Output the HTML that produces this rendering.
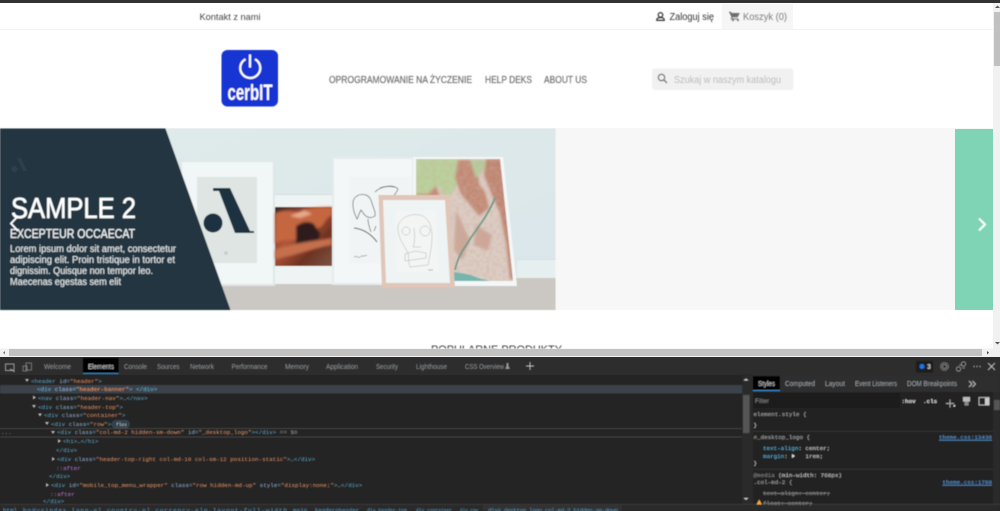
<!DOCTYPE html>
<html lang="pl"><head><meta charset="utf-8"><title>cerbIT</title>
<style>
html,body{margin:0;padding:0;width:1000px;height:511px;overflow:hidden;background:#fff}
svg{display:block}
text{font-family:"Liberation Sans",sans-serif;white-space:pre}
.m text,text.m{font-family:"Liberation Mono",monospace;font-size:5.9px}
.t{fill:#5db0d7}.a{fill:#9bbbdc}.v{fill:#f29766}.g{fill:#9a9a9a}.p{fill:#c678dd}
.tab text,.tab{font-size:7px;fill:#9aa0a6}
.n{fill:#777;font-size:10px;stroke:#777;stroke-width:.25}
.h{fill:#e4e8ea;font-size:10px;stroke:#e4e8ea;stroke-width:.12}
.l{fill:#5b9bd5;text-decoration:underline}
.st{fill:#8a8a8a;text-decoration:line-through}
.s{fill:#c8c8c8}
.bc{fill:#4f8fb0}
</style></head><body>
<svg width="1000" height="511" viewBox="0 0 1000 511" xmlns="http://www.w3.org/2000/svg">
<defs>
<linearGradient id="w" x1="0" y1="0" x2="1" y2="1"><stop offset="0" stop-color="#e0eaea"/><stop offset="1" stop-color="#dae6ea"/></linearGradient>
<linearGradient id="can" x1="0" y1="0" x2="1" y2="1"><stop offset="0" stop-color="#3a2826"/><stop offset=".4" stop-color="#b5563a"/><stop offset=".7" stop-color="#6e3222"/><stop offset="1" stop-color="#7a5444"/></linearGradient>
<filter id="b2" x="-5%" y="-5%" width="110%" height="110%"><feGaussianBlur stdDeviation="0.4"/></filter>
<filter id="b1" x="-10%" y="-10%" width="120%" height="120%"><feGaussianBlur stdDeviation="1.2"/></filter>
<filter id="noise" x="0" y="0" width="100%" height="100%"><feTurbulence type="fractalNoise" baseFrequency=".3" numOctaves="2" seed="4"/><feGaussianBlur stdDeviation=".5"/><feColorMatrix values="0 0 0 0 .6  0 0 0 0 .42  0 0 0 0 .36  0 0 0 1.1 -.42"/></filter>
<clipPath id="mc"><path d="M416 159H500L513 281H416z"/></clipPath>
</defs>

<rect width="1000" height="511" fill="#fff"/>
<rect width="1000" height="3" fill="#333"/>
<rect y="29" width="993" height="1" fill="#f3f3f3"/>
<rect x="722" y="4" width="71" height="25" fill="#f6f6f6"/>
<g filter="url(#b2)">
<text x="199.5" y="20" font-size="9.5" fill="#444" textLength="61" lengthAdjust="spacingAndGlyphs">Kontakt z nami</text>
<path d="M660.5 12.6a2.3 2.3 0 1 1 0 4.6a2.3 2.3 0 1 1 0-4.6M656.8 20.4v-.9c0-1.3 2.4-2 3.7-2s3.7.7 3.7 2v.9z" fill="none" stroke="#333" stroke-width="1.2"/>
<text x="669.5" y="20" font-size="10" fill="#333" textLength="44.5" lengthAdjust="spacingAndGlyphs">Zaloguj się</text>
<path d="M729 11.8h2l.6 1.2h8.2l-2.2 4.3h-5l-.6 1.1h6.2v1h-7.7l1-2.1-2-4.5h-.5z" fill="#6e6e6e"/>
<circle cx="733" cy="20.3" r="1" fill="#6e6e6e"/><circle cx="738" cy="20.3" r="1" fill="#6e6e6e"/>
<text x="743" y="20" font-size="10" fill="#7d7d7d" textLength="44" lengthAdjust="spacingAndGlyphs">Koszyk (0)</text>

<rect x="221.5" y="50" width="56.5" height="56.5" rx="6" fill="#1235d3"/>
<path d="M245.5 59.2a10 10 0 1 0 9.5 0" fill="none" stroke="#fff" stroke-width="2.2"/>
<path d="M250 54.5v13" stroke="#fff" stroke-width="2.2"/>
<text x="227.5" y="100" font-size="22" font-weight="bold" fill="#fff" textLength="45" lengthAdjust="spacingAndGlyphs">cerbIT</text>

<text x="329" y="83" class="n" textLength="143" lengthAdjust="spacingAndGlyphs">OPROGRAMOWANIE NA ŻYCZENIE</text>
<text x="485" y="83" class="n" textLength="47" lengthAdjust="spacingAndGlyphs">HELP DEKS</text>
<text x="544" y="83" class="n" textLength="43" lengthAdjust="spacingAndGlyphs">ABOUT US</text>
<rect x="652" y="68.5" width="141.5" height="21.5" rx="3" fill="#f1f1f1"/>
<circle cx="661.5" cy="77.5" r="3.2" fill="none" stroke="#777" stroke-width="1.3"/>
<path d="M664 80l3 3" stroke="#777" stroke-width="1.5"/>
<text x="674" y="83" font-size="10" fill="#b9b9b9" textLength="107" lengthAdjust="spacingAndGlyphs">Szukaj w naszym katalogu</text>
</g>

<rect y="128" width="993" height="182" fill="#f7f7f7"/>
<rect x="955" y="129" width="38" height="181" fill="#7fd4b6"/>
<g filter="url(#b2)">
<rect x="100" y="128.500" width="455.500" height="181.500" fill="url(#w)"/>
<rect x="517" y="259" width="38.500" height="19" fill="#e6efef"/>
<rect x="517" y="259" width="38.500" height=".8" fill="#cfdada"/>
<rect x="100" y="278" width="455.500" height="32" fill="#cbc7c2"/>
<!-- frame 1 -->
<rect x="180" y="160" width="95" height="126" fill="#dfe8e8"/>
<rect x="182" y="162" width="91" height="122" fill="#f1f6f6"/>
<rect x="197" y="177" width="60" height="86" fill="#dfe5e3"/>
<circle cx="213" cy="223" r="9.500" fill="#1f3141"/>
<path d="M213 188H230L250 231H254V233H235L219 191H213z" fill="#1f3141"/>
<circle cx="226" cy="253" r="2" fill="#c9cfcd"/>
<!-- frame 2 -->
<rect x="275" y="194" width="58" height="90" fill="#eef3f3"/>
<rect x="275" y="194" width="58" height="1" fill="#d5dddd"/>
<rect x="275" y="207" width="57" height="59" fill="url(#can)"/>
<g filter="url(#b1)">
<path d="M275 213c10-4 18-2 24-1 8-4 22-5 33-5v9c-8 1-6 10-14 12-12-2-16 4-20 12-6 0-14-1-23 4z" fill="#c4663f"/>
<path d="M296 226c6-4 12-6 18-2l6 10-2 9c-8 2-16 3-22 1z" fill="#2f1c1a"/>
<path d="M275 250c14-6 32-8 57-12v7c-14 2-34 10-57 14z" fill="#c4704e"/>
<path d="M290 216l14-6 8 4-12 4z" fill="#e8a98a"/>
</g>
<!-- frame 3 -->
<rect x="332" y="157" width="82" height="128" fill="#e4ecec"/>
<rect x="334" y="159" width="78" height="124" fill="#f4f7f7"/>
<rect x="349" y="177" width="62" height="86" fill="#f1f4f4"/>
<g fill="none" stroke="#555" stroke-width=".7">
<path d="M353 205c-1-8 6-12 13-10 5 2 5 6 7 11 1 4 3 7 2 10-3 2-7 2-9 0-3-2-4-5-5-6-2 3-3 8-4 9-2-4-4-9-4-14z"/>
<path d="M375 192c6-6 18-8 23-3-3 8-12 13-19 16"/>
<path d="M380 188c6-2 10-2 14-1"/>
<path d="M368 219c0 5 2 10 3 13M376 226l-2 5"/>
<path d="M354 228c10 1 18 7 23 14" stroke="#444" stroke-width="1"/>
<path d="M354 257c4-2 4 2 6 0s3 0 7-2" stroke-width=".5"/>
</g>
<!-- map -->
<path d="M413 157H503L517 286H413z" fill="#f4f7f7"/>
<path d="M416 159H500L513 281H416z" fill="#dccdc3"/>
<g clip-path="url(#mc)">
<g filter="url(#b1)">
<path d="M416 159H458L460 172 456 186 450 195 443 196 440 186 432 194 416 195z" fill="#b9d29b"/>
<path d="M416 194l12 0 8-8 4 10-24 2z" fill="#c78a74"/>
<path d="M458 160l-3 18 6 16 10 12 8 10 10-8-4-16-6-8-2-24z" fill="#c28a74"/>
<path d="M486 159l-2 16 8 20 8 18 6 30 4 36h6l-12-120z" fill="#bf8672"/>
<path d="M470 160h16l-2 10-8 8z" fill="#b5cc9e"/>
<path d="M456 210l14 30-8 20-8-10z" fill="#cba898"/>
<path d="M476 225l16 10-4 16-14-6z" fill="#cda698"/>
</g>
<rect x="416" y="159" width="100" height="122" filter="url(#noise)"/>
<path d="M495 198c-8 20-20 32-28 46-6 8-10 16-12 26" fill="none" stroke="#71998a" stroke-width="1.800"/>
<path d="M452 272c12 1 20 3 26 6l12 3h-38z" fill="#74b5ad"/>
</g>
<!-- pink frame -->
<path d="M378.500 195H449L455 288H382z" fill="#e0c6b9"/>
<path d="M383 200H445L450 283H386z" fill="#eef3f3"/>
<path d="M395 210H436L439 273H397z" fill="#f2f5f4"/>
<g fill="none" stroke="#b0b0b0" stroke-width=".5">
<path d="M398 226c2-8 12-13 22-11 8 2 12 10 12 22 0 8-2 18-4 28l-18 2c-2-6-1-10-2-14-4-8-11-16-10-27z"/>
<circle cx="406" cy="231" r="4"/><ellipse cx="425" cy="231" rx="5" ry="5"/>
<path d="M414 228c1 8 1 14-1 19h8M405 254l10-3 11 2v5l-21 3z"/>
</g>
<path d="M428 270h5" stroke="#888" stroke-width=".6"/>
<!-- dark panel -->
<path d="M0 128.500H165.500L230.500 310H0z" fill="#233441"/>
<circle cx="14.500" cy="169" r="3.200" fill="#2f3f4b"/>
<path d="M17 158h4l6 13h-4z" fill="#2f3f4b"/>
<text x="11" y="218" font-size="28.500" fill="#fff" stroke="#fff" stroke-width=".55" textLength="125" lengthAdjust="spacingAndGlyphs">SAMPLE 2</text>
<text x="10" y="238" font-size="12.500" fill="#eef1f2" stroke="#eef1f2" stroke-width=".3" textLength="125" lengthAdjust="spacingAndGlyphs">EXCEPTEUR OCCAECAT</text>
<text x="10" y="252" class="h" textLength="166" lengthAdjust="spacingAndGlyphs">Lorem ipsum dolor sit amet, consectetur</text>
<text x="10" y="263" class="h" textLength="165" lengthAdjust="spacingAndGlyphs">adipiscing elit. Proin tristique in tortor et</text>
<text x="10" y="274" class="h" textLength="143" lengthAdjust="spacingAndGlyphs">dignissim. Quisque non tempor leo.</text>
<text x="10" y="285" class="h" textLength="111" lengthAdjust="spacingAndGlyphs">Maecenas egestas sem elit</text>
<path d="M18 216l-7 7.500 7 7.500" fill="none" stroke="#fff" stroke-width="1.800"/>
<path d="M979 218.500l6 6-6 6" fill="none" stroke="#fff" stroke-width="2.200"/>
<text x="431" y="353" font-size="11" fill="#3d3d3d" textLength="131" lengthAdjust="spacingAndGlyphs">POPULARNE PRODUKTY</text>
</g>

<rect x="993" y="3" width="7" height="346" fill="#f1f1f1"/>
<rect x="994" y="12" width="6" height="54" fill="#c1c1c1"/>
<path d="M995 8l2.500-2.500L1000 8z" fill="#555"/>
<path d="M995 342l2.500 2.500L1000 342z" fill="#555"/>
<rect y="348.500" width="1000" height="8.500" fill="#f1f1f1"/>
<rect x="9" y="349" width="973" height="7" fill="#c1c1c1"/>
<path d="M5 351l-2 1.700 2 1.700z" fill="#777"/>
<path d="M987 351l2 1.700-2 1.700z" fill="#444"/>

<rect y="357" width="1000" height="154" fill="#242424"/>
<rect y="357" width="1000" height="18" fill="#2d2d2d"/>
<g filter="url(#b2)">
<rect x="5.500" y="364" width="8.500" height="6.500" fill="none" stroke="#bbb" stroke-width=".8"/>
<path d="M10 369l3 1.500 1.500 1.500" stroke="#bbb" stroke-width=".8" fill="none"/>
<rect x="26" y="363" width="5.500" height="7" fill="none" stroke="#888" stroke-width=".8"/>
<rect x="23" y="366" width="4" height="5" fill="none" stroke="#888" stroke-width=".8"/>
<g class="tab">
<text x="44" y="369" textLength="27" lengthAdjust="spacingAndGlyphs">Welcome</text>
<rect x="83" y="358" width="35.500" height="15.500" style="fill:#000"/>
<rect x="83" y="373" width="35.500" height="1" style="fill:#2d8fd8"/>
<text x="88" y="369" style="fill:#d0d0d0" textLength="26" lengthAdjust="spacingAndGlyphs">Elements</text>
<text x="124" y="369" textLength="23" lengthAdjust="spacingAndGlyphs">Console</text>
<text x="157" y="369" textLength="22.500" lengthAdjust="spacingAndGlyphs">Sources</text>
<text x="190" y="369" textLength="24" lengthAdjust="spacingAndGlyphs">Network</text>
<text x="231.500" y="369" textLength="36" lengthAdjust="spacingAndGlyphs">Performance</text>
<text x="285" y="369" textLength="24" lengthAdjust="spacingAndGlyphs">Memory</text>
<text x="326" y="369" textLength="32" lengthAdjust="spacingAndGlyphs">Application</text>
<text x="376" y="369" textLength="22" lengthAdjust="spacingAndGlyphs">Security</text>
<text x="416" y="369" textLength="31" lengthAdjust="spacingAndGlyphs">Lighthouse</text>
<text x="465" y="369" textLength="39" lengthAdjust="spacingAndGlyphs">CSS Overview</text>
<path d="M506.500 363h2v3l1.500 3h-5l1.500-3z" style="fill:#9a9a9a"/>
<path d="M526 366h8M530 362v8" stroke="#ccc" stroke-width=".9" style="fill:none"/>
<rect x="916" y="361" width="17" height="11.500" style="fill:#1b1b1b"/>
<circle cx="922" cy="366.500" r="2.500" style="fill:#1a73e8"/>
<text x="927" y="369" style="fill:#ccc;font-weight:bold">3</text>
<circle cx="944.500" cy="366.500" r="2" style="fill:none" stroke="#aaa" stroke-width=".8"/>
<circle cx="944.500" cy="366.500" r="3.800" style="fill:none" stroke="#aaa" stroke-width="1" stroke-dasharray="1.300 .7"/>
<circle cx="958.500" cy="369" r="2.200" style="fill:none" stroke="#aaa" stroke-width=".8"/>
<circle cx="963.500" cy="364" r="2.200" style="fill:none" stroke="#aaa" stroke-width=".8"/>
<path d="M959 365h3M962 368h3" stroke="#aaa" stroke-width=".8"/>
<circle cx="974" cy="366.500" r=".7" style="fill:#bbb"/><circle cx="977" cy="366.500" r=".7" style="fill:#bbb"/><circle cx="980" cy="366.500" r=".7" style="fill:#bbb"/>
<path d="M988 363l7 7M995 363l-7 7" stroke="#ccc" stroke-width=".9"/>
</g>

<rect y="385" width="742" height="8.500" fill="#3a424a"/>
<rect y="428" width="742" height="1" fill="#444"/>
<rect y="436.500" width="742" height="1" fill="#444"/>
<g class="m">
<path d="M25 379h4l-2 3z M33 395.500v4l3-2z M32 405h4l-2 3z M38 413.500h4l-2 3z M45 422h4l-2 3z M51 431h4l-2 3z M58 439v4l3-2z M52 457v4l3-2z M46 483v4l3-2z" fill="#bbb"/>
<text x="31" y="383"><tspan class="t">&lt;header</tspan> <tspan class="a">id</tspan><tspan class="t">=</tspan><tspan class="v">"header"</tspan><tspan class="t">&gt;</tspan></text>
<text x="37" y="391"><tspan class="t">&lt;div</tspan> <tspan class="a">class</tspan><tspan class="t">=</tspan><tspan class="v">"header-banner"</tspan><tspan class="t">&gt; &lt;/div&gt;</tspan></text>
<text x="38" y="400"><tspan class="t">&lt;nav</tspan> <tspan class="a">class</tspan><tspan class="t">=</tspan><tspan class="v">"header-nav"</tspan><tspan class="t">&gt;</tspan><tspan class="s">…</tspan><tspan class="t">&lt;/nav&gt;</tspan></text>
<text x="38" y="409"><tspan class="t">&lt;div</tspan> <tspan class="a">class</tspan><tspan class="t">=</tspan><tspan class="v">"header-top"</tspan><tspan class="t">&gt;</tspan></text>
<text x="44" y="417"><tspan class="t">&lt;div</tspan> <tspan class="a">class</tspan><tspan class="t">=</tspan><tspan class="v">"container"</tspan><tspan class="t">&gt;</tspan></text>
<text x="51" y="426"><tspan class="t">&lt;div</tspan> <tspan class="a">class</tspan><tspan class="t">=</tspan><tspan class="v">"row"</tspan><tspan class="t">&gt;</tspan></text>
<rect x="112" y="420.500" width="17.500" height="7.500" rx="3.700" fill="#2f3f4c" stroke="#4a6070" stroke-width=".5"/>
<text x="116" y="426" style="font-size:4.5px" fill="#ccc">flex</text>
<text x="57" y="434"><tspan class="t">&lt;div</tspan> <tspan class="a">class</tspan><tspan class="t">=</tspan><tspan class="v">"col-md-2 hidden-sm-down"</tspan> <tspan class="a">id</tspan><tspan class="t">=</tspan><tspan class="v">"_desktop_logo"</tspan><tspan class="t">&gt;&lt;/div&gt;</tspan> <tspan class="g">== $0</tspan></text>
<text x="1" y="434" fill="#aaa">...</text>
<text x="63" y="443"><tspan class="t">&lt;h1&gt;</tspan><tspan class="s">…</tspan><tspan class="t">&lt;/h1&gt;</tspan></text>
<text x="56" y="452"><tspan class="t">&lt;/div&gt;</tspan></text>
<text x="57" y="461"><tspan class="t">&lt;div</tspan> <tspan class="a">class</tspan><tspan class="t">=</tspan><tspan class="v">"header-top-right col-md-10 col-sm-12 position-static"</tspan><tspan class="t">&gt;</tspan><tspan class="s">…</tspan><tspan class="t">&lt;/div&gt;</tspan></text>
<text x="56" y="470"><tspan class="p">::after</tspan></text>
<text x="49" y="478"><tspan class="t">&lt;/div&gt;</tspan></text>
<text x="51" y="487"><tspan class="t">&lt;div</tspan> <tspan class="a">id</tspan><tspan class="t">=</tspan><tspan class="v">"mobile_top_menu_wrapper"</tspan> <tspan class="a">class</tspan><tspan class="t">=</tspan><tspan class="v">"row hidden-md-up"</tspan> <tspan class="a">style</tspan><tspan class="t">=</tspan><tspan class="v">"display:none;"</tspan><tspan class="t">&gt;</tspan><tspan class="s">…</tspan><tspan class="t">&lt;/div&gt;</tspan></text>
<text x="50" y="496"><tspan class="p">::after</tspan></text>
<text x="43" y="503"><tspan class="t">&lt;/div&gt;</tspan></text>
</g>

<rect y="504" width="1000" height="7" fill="#2b2b2b"/>
<rect y="504" width="1000" height=".7" fill="#3f3f3f"/>
<rect x="483" y="505" width="139" height="6" fill="#333"/>
<g class="m">
<text x="3" y="512" class="bc m">html</text>
<text x="23" y="512" class="bc m" textLength="264" lengthAdjust="spacing">body#index.lang-pl.country-pl.currency-pln.layout-full-width</text>
<text x="293" y="512" class="bc m">main</text>
<text x="315" y="512" class="bc m" textLength="44" lengthAdjust="spacingAndGlyphs">header#header</text>
<text x="367" y="512" class="bc m" textLength="40" lengthAdjust="spacingAndGlyphs">div.header-top</text>
<text x="416" y="512" class="bc m" textLength="36" lengthAdjust="spacingAndGlyphs">div.container</text>
<text x="460" y="512" class="bc m" textLength="18" lengthAdjust="spacingAndGlyphs">div.row</text>
<text x="488" y="512" class="bc m" textLength="130" lengthAdjust="spacing">div#_desktop_logo.col-md-2.hidden-sm-down</text>
</g>

<rect x="742" y="375" width="11" height="129" fill="#2b2b2b"/>
<rect x="743" y="395" width="6.500" height="38" fill="#555"/>
<path d="M743.500 380.500l2.500-2 2.500 2z" fill="#ccc"/>
<path d="M743.500 498l2.500 2 2.500-2z" fill="#ccc"/>

<rect x="753" y="375" width="247" height="129" fill="#242424"/>
<rect x="753" y="375" width="247" height="17" fill="#2d2d2d"/>
<g class="tab">
<rect x="753" y="376" width="27" height="14" style="fill:#000"/>
<rect x="753" y="390" width="27" height="1" style="fill:#2d8fd8"/>
<text x="758" y="386" style="fill:#d0d0d0" textLength="17" lengthAdjust="spacingAndGlyphs">Styles</text>
<text x="785" y="386" textLength="30" lengthAdjust="spacingAndGlyphs">Computed</text>
<text x="825" y="386" textLength="20" lengthAdjust="spacingAndGlyphs">Layout</text>
<text x="855" y="386" textLength="42" lengthAdjust="spacingAndGlyphs">Event Listeners</text>
<text x="907" y="386" textLength="50" lengthAdjust="spacingAndGlyphs">DOM Breakpoints</text>
<path d="M969 381l3 3-3 3M972.500 381l3 3-3 3" stroke="#bbb" stroke-width=".9" style="fill:none"/>
</g>
<rect x="753" y="393" width="147" height="15" fill="#1d1d1d"/>
<text x="755" y="403" font-size="6.500" fill="#888" textLength="14" lengthAdjust="spacingAndGlyphs">Filter</text>
<g class="m">
<text x="901.500" y="403" fill="#ddd" font-weight="bold">:hov</text>
<text x="923" y="403" fill="#ddd" font-weight="bold">.cls</text>
<text x="753.500" y="416" fill="#aaa">element.style {</text>
<text x="753.500" y="427" fill="#ccc">}</text>
<rect x="753" y="431" width="240" height=".7" fill="#3a3a3a"/>
<text x="753.500" y="439" fill="#aaa">#_desktop_logo {</text>
<text x="939" y="439" class="l m">theme.css:13430</text>
<text x="763" y="450"><tspan fill="#5db0d7">text-align</tspan><tspan fill="#ccc">: center;</tspan></text>
<text x="763" y="458"><tspan fill="#5db0d7">margin</tspan><tspan fill="#ccc">:     1rem;</tspan></text>
<path d="M792 454v4l3-2z" fill="#ddd"/>
<text x="753.500" y="465" fill="#ccc">}</text>
<rect x="753" y="469" width="240" height=".7" fill="#3a3a3a"/>
<text x="753.500" y="477"><tspan fill="#888">@media</tspan><tspan fill="#ccc"> (min-width: 768px)</tspan></text>
<text x="753.500" y="484" fill="#aaa">.col-md-2 {</text>
<text x="942.500" y="484" class="l m">theme.css:1788</text>
<text x="763" y="495" class="st m">text-align: center;</text>
<text x="763" y="505" class="st m">float: center;</text>
</g>
<path d="M756.500 504.500l2.700-5 2.700 5z" fill="#f2a93b"/>
<path d="M946 403.500h8M950 399.500v8" stroke="#aaa" stroke-width=".9" fill="none"/>
<path d="M953 406.500h2v-2z" fill="#fff"/>
<rect x="963" y="397" width="7" height="4.500" fill="#bbb"/><rect x="964.500" y="401.500" width="4" height="4" fill="#888"/>
<rect x="979" y="397.500" width="10" height="7.500" fill="none" stroke="#ccc" stroke-width=".8"/>
<rect x="985" y="398" width="4" height="7" fill="#ccc"/>
<rect x="993" y="392" width="7" height="112" fill="#2b2b2b"/>
<rect x="994" y="400" width="6" height="10" fill="#555"/>
</g>
</svg>
</body></html>
